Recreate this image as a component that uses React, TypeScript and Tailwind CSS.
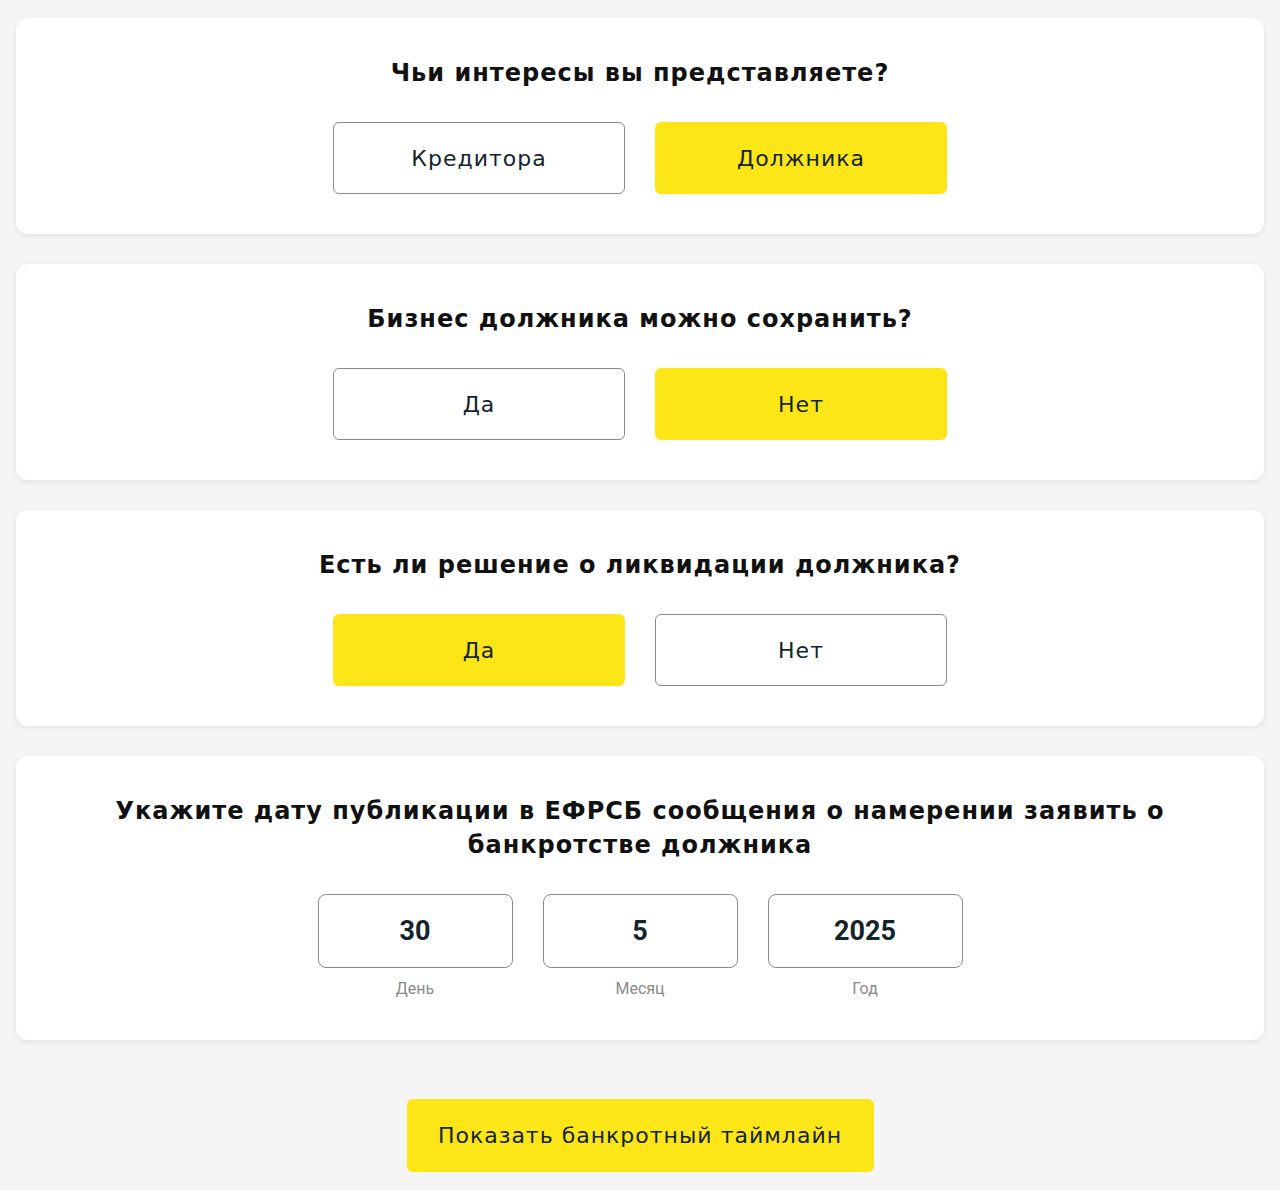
import { useState } from "react";

const font = { fontFamily: '"DejaVu Sans", "Noto Sans", sans-serif' };

function Choice({
  options,
  value,
  onChange,
}: {
  options: string[];
  value: number;
  onChange: (i: number) => void;
}) {
  return (
    <div className="flex justify-center gap-[30px] mt-[34px]">
      {options.map((o, i) => (
        <button
          key={o}
          onClick={() => onChange(i)}
          className={`w-[292px] h-[72px] rounded-[6px] text-[22px] tracking-[1px] text-[#13242c] ${
            value === i
              ? "bg-[#fce618]"
              : "bg-white border border-[#8a8a8a]"
          }`}
        >
          {o}
        </button>
      ))}
    </div>
  );
}

function Card({ children, className = "" }: { children: React.ReactNode; className?: string }) {
  return (
    <div
      className={`bg-white rounded-[12px] shadow-[0_2px_6px_rgba(0,0,0,0.08)] ${className}`}
    >
      {children}
    </div>
  );
}

const titleCls = "text-center text-[24px] tracking-[1px] font-bold text-[#111]";

export default function App() {
  const [side, setSide] = useState(1);
  const [save, setSave] = useState(1);
  const [liq, setLiq] = useState(0);

  const dates = [
    { v: "30", l: "День" },
    { v: "5", l: "Месяц" },
    { v: "2025", l: "Год" },
  ];

  return (
    <div className="min-h-[1190px] bg-[#f5f5f5] px-4 pt-[18px]" style={font}>
      <div className="flex flex-col gap-[30px]">
        <Card className="pt-[40px] pb-[40px]">
          <h2 className={`${titleCls} leading-[30px]`}>Чьи интересы вы представляете?</h2>
          <Choice options={["Кредитора", "Должника"]} value={side} onChange={setSide} />
        </Card>

        <Card className="pt-[40px] pb-[40px]">
          <h2 className={`${titleCls} leading-[30px]`}>Бизнес должника можно сохранить?</h2>
          <Choice options={["Да", "Нет"]} value={save} onChange={setSave} />
        </Card>

        <Card className="pt-[40px] pb-[40px]">
          <h2 className={`${titleCls} leading-[30px]`}>Есть ли решение о ликвидации должника?</h2>
          <Choice options={["Да", "Нет"]} value={liq} onChange={setLiq} />
        </Card>

        <Card className="pt-[38px] pb-[42px]">
          <h2 className={`${titleCls} mx-auto max-w-[1090px] leading-[34px]`}>
            Укажите дату публикации в ЕФРСБ сообщения о намерении заявить о банкротстве должника
          </h2>
          <div className="flex justify-center gap-[30px] mt-[32px]">
            {dates.map((d) => (
              <div key={d.l} className="flex flex-col items-center">
                <div
                  className="w-[195px] h-[74px] rounded-[8px] border border-[#8a8a8a] flex items-center justify-center text-[27px] font-bold text-[#13242c]"
                  style={{ fontFamily: '"Roboto", sans-serif' }}
                >
                  {d.v}
                </div>
                <div
                  className="mt-[12px] text-[16px] leading-[18px] text-[#8a8a8a]"
                  style={{ fontFamily: '"Roboto", sans-serif' }}
                >
                  {d.l}
                </div>
              </div>
            ))}
          </div>
        </Card>
      </div>

      <div className="flex justify-center mt-[59px]">
        <button className="w-[467px] h-[73px] rounded-[6px] bg-[#fce618] text-[22px] tracking-[1px] text-[#13242c]">
          Показать банкротный таймлайн
        </button>
      </div>
    </div>
  );
}
